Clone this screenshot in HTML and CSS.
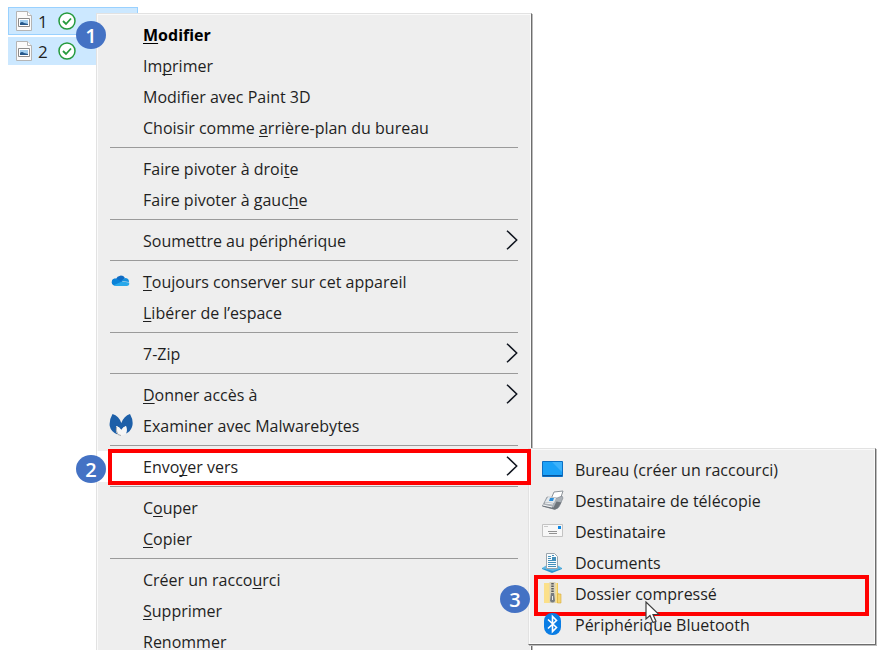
FILE: index.html
```html
<!DOCTYPE html>
<html lang="fr">
<head>
    <meta charset="UTF-8">
    <meta name="viewport" content="width=device-width, initial-scale=1.0">
    <title>Envoyer vers un dossier compressé</title>
    <link rel="stylesheet" href="styles.css">
</head>
<body>
    <!-- Symboles réutilisés -->
    <svg class="symbols" aria-hidden="true">
        <symbol id="file" viewBox="0 0 16 20">
            <path d="M.5 .5h11l4 4v15H.5z" fill="#fafafa" stroke="#b4b4b4"/>
            <path d="M11.500 .5v4h4" fill="#fff" stroke="#b4b4b4"/>
            <path d="M2.500 7.500h11v8h-11z" fill="#fff" stroke="#8b8b8b"/>
            <path d="M4 9h8v5H4z" fill="#9fcdf0"/>
            <path d="M4 12q2-2 4 0l4 1v1H4z" fill="#24588c"/>
        </symbol>
        <symbol id="check" viewBox="0 0 18 18">
            <circle cx="9" cy="9" r="8" fill="#fff" stroke="#259a3c" stroke-width="1.500"/>
            <path d="M5 9l3 3 5-5.500" fill="none" stroke="#259a3c" stroke-width="1.800"/>
        </symbol>
        <symbol id="arrow" viewBox="0 0 12 20">
            <path d="M1 .7l9.700 9.300L1 19.300" fill="none" stroke="#10151f" stroke-width="1.500"/>
        </symbol>
    </svg>

    <main class="desktop">
        <ul class="files">
            <li class="file file-active">
                <svg class="file-icon"><use href="#file"/></svg>
                <span class="file-name">1</span>
                <svg class="file-check"><use href="#check"/></svg>
            </li>
            <li class="file">
                <svg class="file-icon"><use href="#file"/></svg>
                <span class="file-name">2</span>
                <svg class="file-check"><use href="#check"/></svg>
            </li>
        </ul>

        <!-- Menu contextuel -->
        <ul class="menu">
            <li class="entry">
                <button type="button" class="item item-default"><span><u>M</u>odifier</span></button>
                <span class="step">1</span>
            </li>
            <li><button type="button" class="item"><span>Im<u>p</u>rimer</span></button></li>
            <li><button type="button" class="item"><span>Modifier avec Paint 3D</span></button></li>
            <li><button type="button" class="item"><span>Choisir comme <u>a</u>rrière-plan du bureau</span></button></li>
            <li class="separator"></li>
            <li><button type="button" class="item"><span>Faire pivoter à droi<u>t</u>e</span></button></li>
            <li><button type="button" class="item"><span>Faire pivoter à gauc<u>h</u>e</span></button></li>
            <li class="separator"></li>
            <li><button type="button" class="item"><span>Soumettre au périphérique</span><svg class="arrow"><use href="#arrow"/></svg></button></li>
            <li class="separator"></li>
            <li>
                <button type="button" class="item">
                    <svg class="icon" viewBox="0 0 24 24">
                        <path d="M7 10a5 5 0 0 1 9-1l-4 5-6 2H5a3 3 0 0 1 2-6z" fill="#0f6cc4"/>
                        <path d="M7 9.500l6 3-7 4.200A3.300 3.300 0 0 1 7 9.500z" fill="#0a82d8"/>
                        <path d="M12 12l4-3a4 4 0 0 1 4 4z" fill="#1490df"/>
                        <path d="M5 16l8-3.500 7 1q1 3-2 3.500H7q-1 0-2-1z" fill="#28a8ea"/>
                    </svg>
                    <span><u>T</u>oujours conserver sur cet appareil</span>
                </button>
            </li>
            <li><button type="button" class="item"><span><u>L</u>ibérer de l’espace</span></button></li>
            <li class="separator"></li>
            <li><button type="button" class="item"><span>7-Zip</span><svg class="arrow"><use href="#arrow"/></svg></button></li>
            <li class="separator"></li>
            <li><button type="button" class="item"><span><u>D</u>onner accès à</span><svg class="arrow"><use href="#arrow"/></svg></button></li>
            <li>
                <button type="button" class="item">
                    <svg class="icon" viewBox="0 0 24 24">
                        <path d="M3.500 1Q10 3 12.300 10 15 3 21 1q4 7 2 13-2 5-6 6.500 1.500-3.500 0-7.500-3 1-4.700 4-1.800-3-4.800-4-1.500 4 1 8.500Q2 19 .7 13 0 7 3.500 1z" fill="#1d5fa8"/>
                        <path d="M7.500 13q3 1 4.800 4 1.700-3 4.700-4 1.500 4 0 7.500-5 3.500-8.500 1-2.500-4.500-1-8.500z" fill="#f6f6f6"/>
                        <path d="M7.500 14q-1 4 1.500 7.500l3 1" fill="none" stroke="#a6a9ad"/>
                    </svg>
                    <span>Examiner avec Malwarebytes</span>
                </button>
            </li>
            <li class="separator"></li>
            <li class="entry">
                <button type="button" class="item item-open"><span>Envo<u>y</u>er vers</span><svg class="arrow"><use href="#arrow"/></svg></button>

                <!-- Sous-menu Envoyer vers -->
                <ul class="menu submenu">
                    <li>
                        <button type="button" class="item">
                            <svg class="icon" viewBox="0 0 24 24">
                                <path d="M1.500 4.500h20v15h-20z" fill="#1ba1f7" stroke="#0b6fc4"/>
                                <path d="M11 5h10v10z" fill="#3db2fb"/>
                                <path d="M2 18.500h19" stroke="#0756a0"/>
                            </svg>
                            <span>Bureau (créer un raccourci)</span>
                        </button>
                    </li>
                    <li>
                        <button type="button" class="item">
                            <svg class="icon" viewBox="0 0 24 24">
                                <path d="M13 4l9-1-3 9-9-1z" fill="#fff" stroke="#8d9399"/>
                                <path d="M6 9l10 1 5-2 1 2-4 9-4 2.500L1.500 18z" fill="#aab0b6" stroke="#7b8289" stroke-width=".6"/>
                                <path d="M7 9l8 1-2 5-9-1z" fill="#e4e9ed"/>
                                <path d="M9 10h4l-1 3H8z" fill="#2a8fdc"/>
                                <path d="M1.500 17.500l11 2 3-6 5 1-4 6-3 1-12-3z" fill="#6e757c"/>
                                <path d="M2 17l9 2M4 15l8 1" stroke="#f4f5f6"/>
                            </svg>
                            <span>Destinataire de télécopie</span>
                        </button>
                    </li>
                    <li>
                        <button type="button" class="item">
                            <svg class="icon" viewBox="0 0 24 24">
                                <path d="M1.500 5.500h20v12h-20z" fill="#f7f7f7" stroke="#c3c3c3"/>
                                <path d="M17 7h3v3h-3z" fill="#0c86e3"/>
                                <path d="M7 12.500h9M8 14.500h8" stroke="#929292"/>
                                <path d="M3 7.500h4" stroke="#c9c9c9"/>
                            </svg>
                            <span>Destinataire</span>
                        </button>
                    </li>
                    <li>
                        <button type="button" class="item">
                            <svg class="icon" viewBox="0 0 24 24">
                                <path d="M1 18l5-3h10l5 3-9 4z" fill="#5fb8e6"/>
                                <path d="M1 18l11 3 9-3v1l-10 4-10-4z" fill="#2b95cf"/>
                                <path d="M5.500 3.500h8l3 3v12h-11z" fill="#f8fbfd" stroke="#9aa5ad"/>
                                <path d="M7 6.500h3M11 5.500h2M7 8.500h3M7 10.500h8M7 12.500h8M7 14.500h8M7 16.500h8" stroke="#438fba"/>
                                <path d="M11 7h4v3h-4z" fill="#438fba"/>
                            </svg>
                            <span>Documents</span>
                        </button>
                    </li>
                    <li class="entry">
                        <button type="button" class="item">
                            <svg class="icon" viewBox="0 0 24 24">
                                <path d="M3 2h14v10l3 2v8H3z" fill="#eec957"/>
                                <path d="M3 2h13v20H3z" fill="#fbe08a"/>
                                <path d="M16.500 13h3.500v9h-3.500z" fill="#f6d672" stroke="#d9ad3d" stroke-width=".6"/>
                                <path d="M8.500 1h6v21h-6z" fill="#d8d3bd"/>
                                <path d="M11.500 2v12" stroke="#5a5b5c" stroke-width="2.500" stroke-dasharray="1.500 1"/>
                                <path d="M10 12h3l1 8q-2.500 3-5 0z" fill="#777c80"/>
                                <path d="M11.500 15v4" stroke="#e9e9e9"/>
                            </svg>
                            <span>Dossier compressé</span>
                        </button>
                        <span class="frame frame-folder"></span>
                        <span class="step step-folder">3</span>
                    </li>
                    <li class="entry">
                        <button type="button" class="item">
                            <svg class="icon" viewBox="0 0 24 24">
                                <rect x="3" y="1" width="17" height="22" rx="8" fill="#0a7de4"/>
                                <path d="M7 7.500l8.500 8-4 4V4.500l4 4-8.500 8" fill="none" stroke="#fff" stroke-width="1.600"/>
                            </svg>
                            <span>Périphérique Bluetooth</span>
                        </button>
                        <svg class="pointer" viewBox="0 0 15 22">
                            <path d="M1 1v17l4-3.500 3 7 3-1.300-3-6.700h6z" fill="#fff" stroke="#3f3f3f" stroke-width="1.200"/>
                        </svg>
                    </li>
                </ul>
                <span class="frame"></span>
                <span class="step step-send">2</span>
            </li>
            <li class="separator"></li>
            <li><button type="button" class="item"><span>C<u>o</u>uper</span></button></li>
            <li><button type="button" class="item"><span><u>C</u>opier</span></button></li>
            <li class="separator"></li>
            <li><button type="button" class="item"><span>Créer un racco<u>u</u>rci</span></button></li>
            <li><button type="button" class="item"><span><u>S</u>upprimer</span></button></li>
            <li><button type="button" class="item"><span>Reno<u>m</u>mer</span></button></li>
        </ul>
    </main>
</body>
</html>
```
FILE: styles.css
```css
* {
    box-sizing: border-box;
}
body {
    margin: 0;
    background-color: #ffffff;
    font-family: "Open Sans", "Noto Sans", sans-serif;
    font-size: 16px;
    color: #1f1f1f;
}
ul {
    margin: 0;
    padding: 0;
    list-style: none;
}
.symbols {
    display: none;
}
.desktop {
    position: relative;
    height: calc(100vh - 10px);
    padding: 7px 8px;
    overflow: hidden;
}

/* Fichiers sélectionnés */
.files {
    display: flex;
    flex-direction: column;
    gap: 2px;
    width: 130px;
}
.file {
    display: flex;
    align-items: center;
    height: 28px;
    padding-left: 7px;
    border: 1px solid #cce8ff;
    background-color: #cce8ff;
}
.file-active {
    border-color: #99d1ff;
}
.file-icon {
    width: 16px;
    height: 20px;
}
.file-name {
    width: 26px;
    padding-left: 6px;
    font-size: 17px;
}
.file-check {
    width: 18px;
    height: 18px;
}

/* Menus */
.menu {
    position: absolute;
    top: 13px;
    left: 96px;
    width: 436px;
    padding: 5px 0;
    background-color: #eeeeee;
    border: 1px solid #e2e2e2;
    border-right-color: #6d6d6d;
    border-bottom-color: #6d6d6d;
    box-shadow: inset 0 0 0 1px #fafafa, 1px 1px 0 #bdbdbd;
}
.submenu {
    top: -3px;
    left: 431px;
    width: 348px;
    padding-bottom: 4px;
}
.entry {
    position: relative;
}
.item {
    display: flex;
    align-items: center;
    width: 100%;
    height: 31px;
    padding: 0 13px 0 46px;
    border: none;
    background: none;
    color: inherit;
    font: inherit;
    text-align: left;
    white-space: nowrap;
}
.item-default {
    color: #000000;
    font-weight: bold;
}
.item-open {
    background-color: #ffffff;
}
.item u {
    text-decoration-skip-ink: none;
    text-underline-offset: 2px;
}
.icon {
    width: 24px;
    height: 24px;
    margin: 0 10px 1px -34px;
}
.arrow {
    width: 12px;
    height: 20px;
    margin: 0 0 2px auto;
}
.separator {
    height: 10px;
    padding: 4px 13px;
}
.separator::before {
    content: "";
    display: block;
    height: 1px;
    background-color: #9a9a9a;
}

/* Repères des étapes */
.step {
    display: flex;
    align-items: center;
    justify-content: center;
    position: absolute;
    top: 2px;
    left: -21px;
    width: 30px;
    height: 28px;
    border-radius: 50%;
    background-color: #4472c4;
    color: #ffffff;
    font-size: 20px;
    font-weight: 600;
}
.step-send {
    top: 4px;
}
.step-folder {
    top: 7px;
    left: -29px;
}
.frame {
    position: absolute;
    top: -2px;
    right: 0;
    bottom: -3px;
    left: 11px;
    border: 4px solid #ff0000;
}
.frame-folder {
    top: -3px;
    right: 6px;
    bottom: -7px;
    left: 5px;
}
.pointer {
    position: absolute;
    top: -8px;
    left: 116px;
    width: 15px;
    height: 22px;
}
```
